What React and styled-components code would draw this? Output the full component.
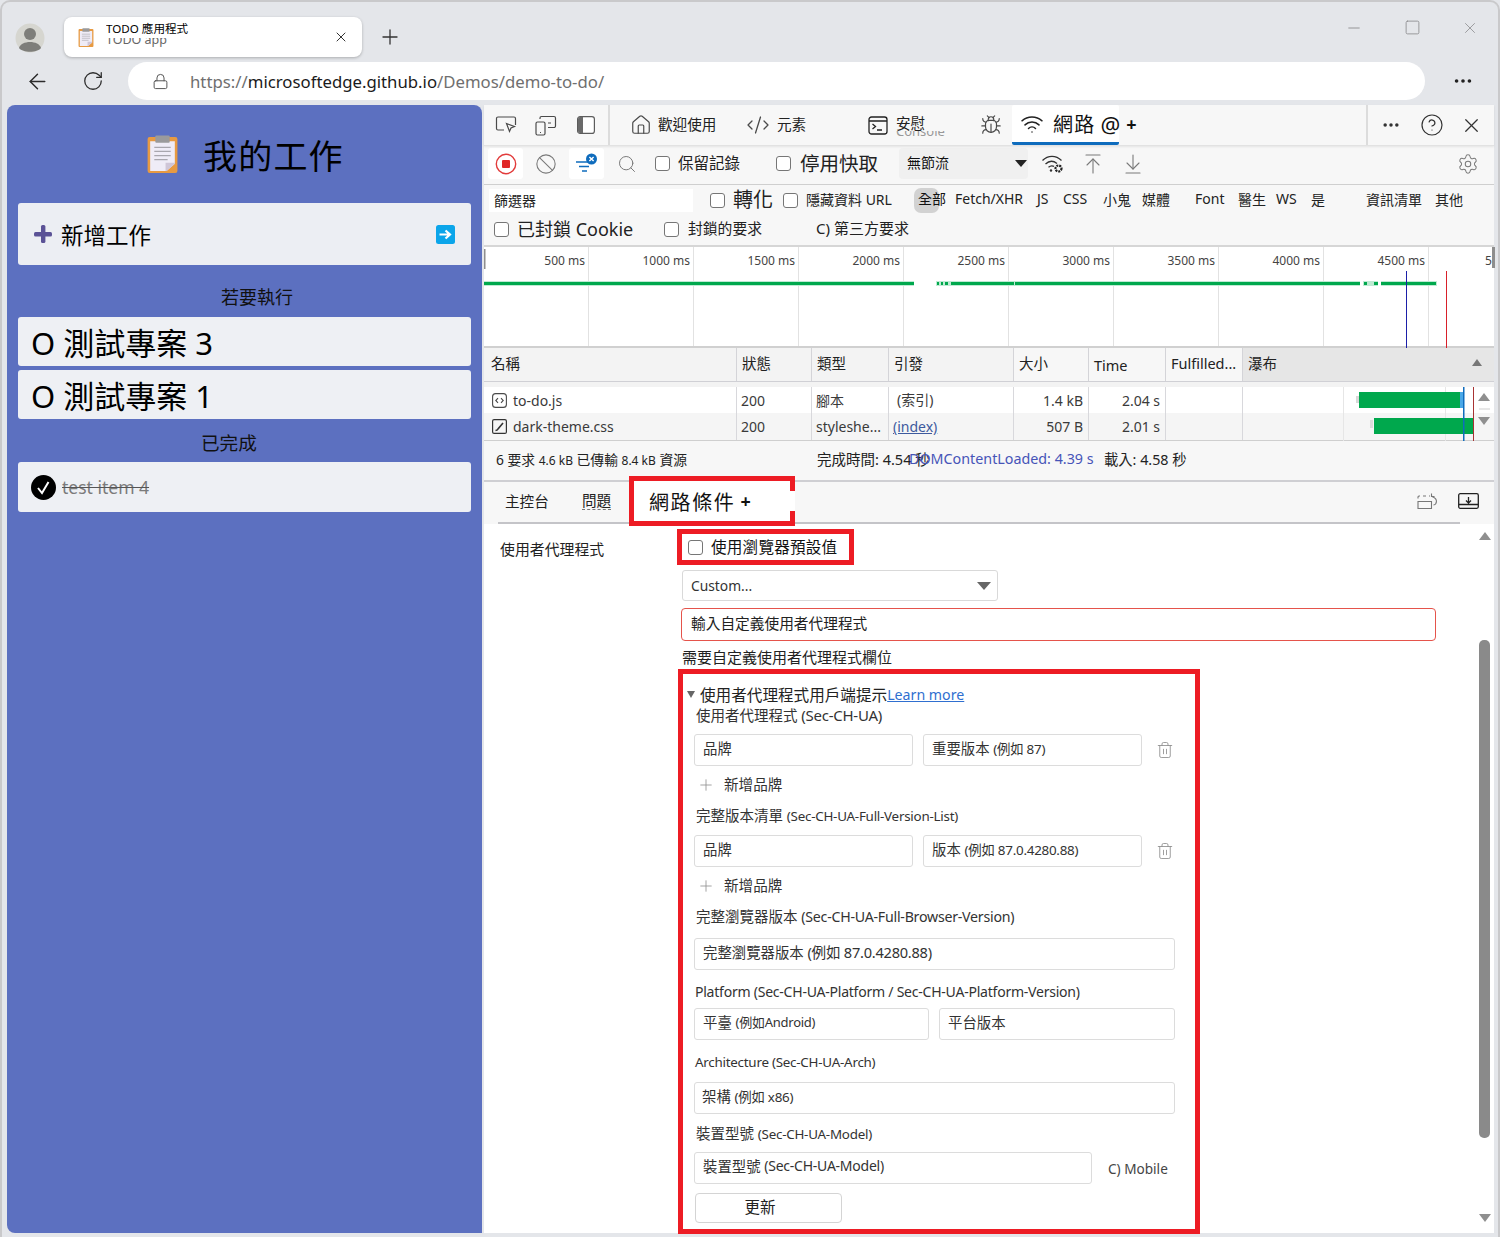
import React from "react";
import styled, { createGlobalStyle } from "styled-components";
import {
  ArrowLeft,
  RotateCw,
  Lock,
  X,
  Plus,
  Minus,
  Square,
  MoreHorizontal,
  House,
  CircleHelp,
  Bug,
  Wifi,
  Search,
  Ban,
  ArrowUpToLine,
  ArrowDownToLine,
  Settings,
  Trash2,
  CodeXml,
} from "lucide-react";

const GlobalStyle = createGlobalStyle`
  html, body {
    margin: 0;
    padding: 0;
    background: #e4e6ea;
  }
  * {
    box-sizing: border-box;
  }
  body {
    font-family: "Noto Sans", "Noto Sans CJK TC", sans-serif;
    color: #1c1c1c;
  }
`;

const Win = styled.div`
  width: 1500px;
  height: 1237px;
  overflow: hidden;
  background: #e4e6ea;
  border: 2px solid #c9c9cb;
  border-bottom: none;
  border-radius: 10px 10px 0 0;
`;

/* browser chrome */
const TabStrip = styled.div`
  height: 58px;
  display: flex;
  align-items: flex-start;
`;

const Avatar = styled.div`
  width: 30px;
  height: 30px;
  margin: 21px 0 0 13px;
  flex: none;
`;

const BrowserTab = styled.div`
  width: 298px;
  height: 40px;
  margin: 15px 0 0 19px;
  padding: 0 13px 0 14px;
  display: flex;
  align-items: center;
  background: #fff;
  border-radius: 8px;
  box-shadow: 0 1px 3px rgba(0, 0, 0, 0.25);
`;

const TabTitles = styled.div`
  flex: 1;
  margin: -5px 0 0 12px;
  height: 27px;
  overflow: hidden;
`;

const TabTitle = styled.div`
  position: relative;
  height: 17px;
  line-height: 16px;
  font-size: 11.6px;
  color: #000;
  background: #fff;
`;

const GhostText = styled.div`
  margin-top: -6px;
  line-height: 16px;
  font-size: 12.5px;
  color: #666;
`;

const NewTab = styled.div`
  margin: 23px 0 0 16px;
  color: #333;
  display: flex;
`;

const WindowButtons = styled.div`
  margin: 17px -1px 0 auto;
  display: flex;
  color: #8d8d8f;
`;

const WindowButton = styled.div`
  width: 58px;
  display: flex;
  justify-content: center;
`;

const AddressRow = styled.div`
  height: 45px;
  padding-top: 2px;
  display: flex;
  align-items: flex-start;
`;

const NavButton = styled.div`
  width: 56px;
  height: 38px;
  display: flex;
  align-items: center;
  justify-content: center;
  color: #2c2c2c;
  margin-left: ${(p) => p.$ml || 0}px;
`;

const UrlBar = styled.div`
  width: 1297px;
  height: 38px;
  margin-left: 7px;
  padding-left: 24px;
  display: flex;
  align-items: center;
  background: #fff;
  border-radius: 19px;
  color: #555;
`;

const UrlText = styled.div`
  margin-left: 21px;
  font-size: 16.75px;
  color: #6f6f6f;
  b {
    font-weight: 400;
    color: #1a1a1a;
  }
`;

const MoreButton = styled.div`
  margin-left: 27px;
  height: 38px;
  display: flex;
  align-items: center;
  color: #222;
`;

const Content = styled.div`
  height: 1128px;
  padding-left: 5px;
  display: flex;
  gap: 2px;
`;

/* todo app */
const TodoPanel = styled.div`
  width: 475px;
  flex: none;
  background: #5c70c0;
  border-radius: 8px 8px 0 8px;
  padding: 0 11px;
`;

const TodoHeader = styled.div`
  height: 98px;
  display: flex;
  align-items: center;
  padding-left: 129px;
  font-size: 34px;
  color: #000;
`;

const TodoTitle = styled.div`
  margin-left: 25px;
  letter-spacing: 1.2px;
`;

const AddCard = styled.div`
  height: 62px;
  display: flex;
  align-items: center;
  padding: 0 16px 0 16px;
  background: #eceef3;
  border-radius: 3px;
  font-size: 22.5px;
  color: #000;
`;

const AddLabel = styled.div`
  flex: 1;
  margin-left: 9px;
`;

const SectionTitle = styled.div`
  height: ${(p) => p.$h}px;
  padding: ${(p) => p.$pt || 0}px 0 0 ${(p) => p.$pl}px;
  line-height: ${(p) => p.$h - (p.$pt || 0)}px;
  font-size: ${(p) => p.$size}px;
  color: #111;
`;

const TaskCard = styled.div`
  height: ${(p) => (p.$done ? 50 : 49)}px;
  margin-bottom: 4px;
  display: flex;
  align-items: center;
  padding-left: 13px;
  background: #eef0f4;
  border-radius: 3px;
  font-size: 31px;
  color: #000;
  white-space: pre;
`;

const DoneText = styled.div`
  margin-left: 6px;
  font-size: 17.5px;
  color: #7b7b7b;
  text-decoration: line-through;
  text-decoration-color: #555;
`;

/* devtools */
const DevTools = styled.div`
  width: 1010px;
  flex: none;
  background: #fff;
  display: flex;
  flex-direction: column;
`;

const MainTabs = styled.div`
  height: 41px;
  display: flex;
  align-items: center;
  background: #f7f7f7;
  border-bottom: 1px solid #e2e2e2;
  box-shadow: 0 1px 2px rgba(0, 0, 0, 0.08);
  position: relative;
`;

const MainTabIcon = styled.div`
  width: ${(p) => p.$w}px;
  height: 40px;
  flex: none;
  margin-left: ${(p) => p.$ml || 0}px;
  display: flex;
  align-items: center;
  justify-content: center;
  color: #4a4a4a;
`;

const MainTabText = styled.div`
  width: ${(p) => p.$w}px;
  flex: none;
  margin: 0 0 3px ${(p) => p.$ml || 0}px;
  font-size: 14.6px;
  white-space: nowrap;
  color: #222;
`;

const Separator = styled.div`
  width: 2px;
  height: 40px;
  flex: none;
  background: #dcdcdc;
`;

const ClippedTab = styled.div`
  width: 80px;
  height: 24px;
  margin: 6px 0 0 3px;
  flex: none;
  overflow: hidden;
`;

const ClippedLabel = styled.div`
  position: relative;
  width: 54px;
  height: 15px;
  line-height: 15px;
  font-size: 14.6px;
  color: #222;
  background: #f7f7f7;
`;

const ClippedGhost = styled.div`
  margin-top: -7px;
  font-size: 13px;
  line-height: 14px;
  color: #999;
`;

const NetworkTab = styled.div`
  width: 107px;
  height: 40px;
  flex: none;
  margin-left: 6px;
  display: flex;
  align-items: center;
  background: #fff;
  border-bottom: 3px solid #0f6cbd;
  border-radius: 2px;
  padding-left: 8px;
  color: #111;
  white-space: nowrap;
  svg {
    flex: none;
  }
`;

const NetworkLabel = styled.span`
  margin-left: 9px;
  font-size: 20px;
  letter-spacing: 1.2px;
`;

const NetworkMark = styled.span`
  margin-left: 5px;
  font-size: 22px;
`;

const NetworkPlus = styled.span`
  margin-left: 6px;
  font-size: 18px;
  font-weight: 700;
`;

const TabActions = styled.div`
  display: flex;
  align-items: center;
  color: #333;
`;

const ActionButton = styled.div`
  width: ${(p) => p.$w}px;
  display: flex;
  justify-content: center;
`;

const Toolbar = styled.div`
  height: 39px;
  padding-bottom: 3px;
  display: flex;
  align-items: center;
  background: #f7f7f7;
  border-bottom: 1px solid #cfcfcf;
`;

const ToolButton = styled.div`
  width: ${(p) => p.$w}px;
  height: 31px;
  flex: none;
  margin-left: ${(p) => p.$ml || 0}px;
  display: flex;
  align-items: center;
  justify-content: center;
  border-radius: 3px;
  color: #7a7a7a;
  background: ${(p) => (p.$lit ? "#fff" : "transparent")};
`;

const Check = styled.span`
  width: 15px;
  height: 15px;
  flex: none;
  display: block;
  margin-left: ${(p) => p.$ml || 0}px;
  background: #fff;
  border: 1.5px solid #767676;
  border-radius: 3px;
`;

const CheckLabel = styled.div`
  width: ${(p) => p.$w}px;
  flex: none;
  margin: 0 0 3px ${(p) => p.$ml || 0}px;
  font-size: ${(p) => p.$size}px;
  white-space: nowrap;
  color: #222;
`;

const ThrottleSelect = styled.div`
  width: 129px;
  height: 31px;
  flex: none;
  padding: 0 1px 0 8px;
  display: flex;
  align-items: center;
  justify-content: space-between;
  border-radius: 4px;
  background: #f0f0f0;
  font-size: 14px;
  color: #111;
`;

const ThrottleText = styled.span`
  margin-bottom: 3px;
`;

const FilterBar = styled.div`
  height: 60px;
  background: #f7f7f7;
  padding-top: 2px;
`;

const FilterRow = styled.div`
  height: ${(p) => p.$h}px;
  display: flex;
  align-items: center;
`;

const FilterInput = styled.div`
  width: 204px;
  height: 23px;
  flex: none;
  margin-left: 5px;
  padding-left: 5px;
  background: #fff;
  font-size: 14px;
  line-height: 23px;
  color: #222;
`;

const TypeChip = styled.div`
  width: ${(p) => p.$w}px;
  flex: none;
  margin-bottom: 3px;
  font-size: 14px;
  white-space: nowrap;
  color: #222;
`;

const ActiveChip = styled.div`
  width: 25px;
  height: 25px;
  flex: none;
  margin-right: 16px;
  padding-left: 4px;
  line-height: 22px;
  font-size: 14px;
  white-space: nowrap;
  background: #d2d2d2;
  border-radius: 7px;
  color: #111;
`;

const Timeline = styled.div`
  position: relative;
  height: 103px;
  display: flex;
  background: #fff;
  border-top: 2px solid #d6d6d6;
  border-bottom: 2px solid #d0d0d0;
`;

const Tick = styled.div`
  width: 105px;
  flex: none;
  padding: 5px 3px 0 0;
  text-align: right;
  font-size: 12px;
  color: #444;
  border-right: 1px solid #e2e2e2;
`;

const LastTick = styled.div`
  flex: 1;
  padding: 5px 0 0 56px;
  font-size: 12px;
  color: #444;
  border-right: 3px solid #8e8e8e;
  border-image: linear-gradient(#8e8e8e 22px, transparent 22px) 1;
`;

const TimelineOverlay = styled.svg`
  position: absolute;
  left: 0;
  top: -2px;
`;

const Table = styled.div`
  position: relative;
  border-bottom: 1px solid #cfcfcf;
`;

const HeaderRow = styled.div`
  display: grid;
  grid-template-columns: 253px 75px 77px 125px 75px 77px 77px 1fr;
  height: 34px;
  background: #f3f3f3;
  border-bottom: 1px solid #d0d0d5;
`;

const HeaderCell = styled.div`
  display: flex;
  align-items: center;
  justify-content: space-between;
  padding: 0 12px ${(p) => (p.$latin ? 0 : 4)}px ${(p) => (p.$first ? 7 : 5)}px;
  font-size: 14.5px;
  white-space: nowrap;
  color: #222;
  background: ${(p) => (p.$sorted ? "#e6e6e6" : p.$plain ? "#f7f7f7" : "transparent")};
  border-right: ${(p) => (p.$sorted ? "none" : "1px solid #d4d4d8")};
`;

const RowGap = styled.div`
  height: 5px;
  background: #f3f3f3;
`;

const DataRow = styled.div`
  display: grid;
  grid-template-columns: 253px 75px 77px 125px 75px 77px 77px 1fr;
  height: ${(p) => p.$h}px;
  background: ${(p) => (p.$alt ? "#f5f5f5" : "#fff")};
`;

const DataCell = styled.div`
  display: flex;
  align-items: center;
  justify-content: ${(p) => (p.$right ? "flex-end" : "flex-start")};
  padding: 0 5px 0 ${(p) => (p.$first ? 8 : 4)}px;
  font-size: 14px;
  white-space: nowrap;
  overflow: hidden;
  color: #3a3a3a;
  border-right: ${(p) => (p.$bare ? "none" : "1px solid #d8d8dc")};
`;

const FileName = styled.span`
  margin-left: 6px;
`;

const Initiator = styled.span`
  margin: 0 0 2px 4px;
`;

const InitiatorLink = styled.span`
  color: #3d5a9e;
  text-decoration: underline;
`;

const WaterfallOverlay = styled.svg`
  position: absolute;
  right: 0;
  top: 34px;
`;

const Summary = styled.div`
  height: 41px;
  padding-bottom: 4px;
  display: flex;
  align-items: center;
  background: #f7f7f7;
  white-space: nowrap;
  border-bottom: 2px solid #cfcfd3;
`;

const SummaryPart = styled.div`
  width: ${(p) => p.$w}px;
  flex: none;
  margin-left: ${(p) => p.$ml || 0}px;
  position: relative;
  color: ${(p) => (p.$link ? "#4654b8" : "#222")};
  font-size: ${(p) => p.$size || 13.8}px;
`;

const SmallNum = styled.span`
  font-size: 12px;
`;

const DrawerTabs = styled.div`
  position: relative;
  height: 42px;
  display: flex;
  align-items: center;
  background: #f7f7f7;
`;

const DrawerLine = styled.div`
  position: absolute;
  left: 14px;
  right: 34px;
  bottom: 0;
  height: 2px;
  background: #c4c4c8;
`;

const DrawerTab = styled.div`
  width: ${(p) => p.$w}px;
  margin: 0 0 6px ${(p) => p.$ml || 0}px;
  flex: none;
  font-size: 14.6px;
  color: #222;
`;

const IssuesLabel = styled.span`
  border-bottom: 1px dashed #777;
  line-height: 17px;
  display: inline-block;
`;

const ActiveDrawerTab = styled.div`
  position: relative;
  z-index: 2;
  width: 166px;
  height: 50px;
  margin-bottom: 4px;
  flex: none;
  display: flex;
  align-items: center;
  border: 5px solid #ed1c24;
  background: #fff;
`;

const ActiveDrawerLabel = styled.div`
  position: relative;
  width: calc(100% + 5px);
  height: 20px;
  padding-left: 15px;
  display: flex;
  align-items: center;
  flex: none;
  background: #fff;
  font-size: 20px;
  letter-spacing: 1.6px;
  color: #111;
`;

const DrawerPlus = styled.span`
  margin-left: 5px;
  font-size: 18px;
  font-weight: 700;
  letter-spacing: 0;
`;

const DrawerActions = styled.div`
  margin: 0 6px 4px auto;
  display: flex;
  align-items: center;
  color: #777;
`;

const DrawerAction = styled.div`
  width: 40px;
  height: 30px;
  display: flex;
  align-items: center;
  justify-content: center;
`;

const Body = styled.div`
  position: relative;
  flex: 1;
  display: grid;
  grid-template-columns: 193px 1fr;
  background: #fff;
  min-height: 0;
`;

const RowLabel = styled.div`
  padding: 14px 0 0 16px;
  font-size: 14.9px;
  color: #222;
`;

const SettingsColumn = styled.div`
  display: flex;
  flex-direction: column;
  align-items: flex-start;
  padding-top: 5px;
`;

const DefaultBox = styled.div`
  width: 177px;
  height: 36px;
  padding-left: 6px;
  display: flex;
  align-items: center;
  border: 5px solid #ed1c24;
`;

const DefaultLabel = styled.div`
  margin: 0 0 2px 8px;
  font-size: 15.6px;
  letter-spacing: 0.2px;
  white-space: nowrap;
  color: #111;
`;

const UaSelect = styled.div`
  width: 316px;
  height: 31px;
  margin: 5px 0 0 5px;
  padding: 0 6px 0 8px;
  display: flex;
  align-items: center;
  justify-content: space-between;
  border: 1px solid #d9d9d9;
  border-radius: 3px;
  font-size: 13.8px;
  color: #333;
`;

const UaInput = styled.div`
  width: 755px;
  height: 33px;
  margin: 7px 0 0 4px;
  padding: 0 0 4px 9px;
  display: flex;
  align-items: center;
  border: 1px solid #e5534b;
  border-radius: 4px;
  font-size: 14.7px;
  color: #222;
`;

const Helper = styled.div`
  height: 20px;
  margin: 6px 0 0 5px;
  line-height: 20px;
  font-size: 15px;
  color: #222;
`;

const HintsBox = styled.div`
  width: 522px;
  height: 565px;
  margin: 2px 0 0 1px;
  padding: 11px 0 0 11px;
  border: 5px solid #ed1c24;
`;

const Disclosure = styled.div`
  height: 20px;
  margin-left: -7px;
  padding-bottom: 2px;
  display: flex;
  align-items: center;
  font-size: 15.6px;
  color: #222;
  white-space: nowrap;
`;

const DisclosureArrow = styled.span`
  width: 0;
  height: 0;
  margin-right: 5px;
  border-left: 4.5px solid transparent;
  border-right: 4.5px solid transparent;
  border-top: 7px solid #666;
`;

const LearnMore = styled.a`
  font-size: 14.2px;
  color: #2f6fd0;
  text-decoration: underline;
`;

const Caption = styled.div`
  height: 20px;
  margin: ${(p) => p.$mt || 0}px 0 0 ${(p) => p.$ml ?? 2}px;
  line-height: 20px;
  font-size: 14.5px;
  color: #333;
  white-space: nowrap;
`;

const Latin = styled.span`
  font-size: ${(p) => p.$size || 13.4}px;
  letter-spacing: -0.25px;
`;

const FieldRow = styled.div`
  display: flex;
  align-items: center;
  gap: 10px;
  margin-top: ${(p) => p.$mt || 0}px;
`;

const Field = styled.div`
  width: ${(p) => p.$w}px;
  height: 32px;
  flex: none;
  padding: 0 0 5px ${(p) => p.$pl ?? 8}px;
  display: flex;
  align-items: center;
  margin-top: ${(p) => p.$mt || 0}px;
  border: 1px solid #dcdcdc;
  border-radius: 3px;
  font-size: 14.4px;
  color: #333;
  white-space: pre;
`;

const TrashButton = styled.div`
  margin-left: 4px;
  display: flex;
  color: #8a8a8a;
`;

const AddBrand = styled.div`
  height: 20px;
  margin: 9px 0 0 3px;
  display: flex;
  align-items: center;
  font-size: 14.6px;
  color: #333;
  svg {
    color: #909090;
    margin-right: 9px;
  }
`;

const AddBrandText = styled.span`
  margin-bottom: 3px;
`;

const MobileToggle = styled.div`
  margin-left: 6px;
  font-size: 13.6px;
  color: #444;
`;

const UpdateButton = styled.div`
  width: 147px;
  height: 30px;
  margin: 9px 0 0 1px;
  padding: 0 17px 3px 0;
  display: flex;
  align-items: center;
  justify-content: center;
  border: 1px solid #d4d4d4;
  border-radius: 4px;
  font-size: 15.5px;
  color: #222;
`;

const Scrollbar = styled.div`
  position: absolute;
  top: 8px;
  right: 3px;
  bottom: 11px;
  width: 13px;
  display: flex;
  flex-direction: column;
  align-items: center;
  justify-content: space-between;
`;

const ScrollThumb = styled.div`
  position: absolute;
  top: 108px;
  left: 1px;
  width: 11px;
  height: 498px;
  border-radius: 5px;
  background: #8a8a8a;
`;

const Triangle = styled.span`
  width: 0;
  height: 0;
  display: block;
  border-left: ${(p) => p.$s}px solid transparent;
  border-right: ${(p) => p.$s}px solid transparent;
  border-${(p) => (p.$up ? "bottom" : "top")}: ${(p) => p.$h}px solid ${(p) => p.$c || "#888"};
`;

const AvatarIcon = () => (
  <svg width="30" height="30" viewBox="0 0 30 30">
    <circle cx="15" cy="15" r="14.5" fill="#d6d6d0" />
    <circle cx="15" cy="11" r="6" fill="#7e7e7a" />
    <path d="M4 25 C6 17 24 17 26 25 C22 30 8 30 4 25Z" fill="#7e7e7a" />
  </svg>
);

const Clipboard = ({ w, h }) => (
  <svg width={w} height={h} viewBox="0 0 30 37">
    <rect x="0.5" y="2" width="29" height="35" rx="2" fill="#e79a42" />
    <path d="M3 6h24v22l-8 7H3z" fill="#efecf7" />
    <path d="M19 35l8-7v-1h-9v8z" fill="#cfc6d8" />
    <rect x="8" y="0.5" width="14" height="7" rx="1" fill="#9a9a9c" />
    <path d="M7 12h16M7 16h16M7 20h16M7 24h13" stroke="#a8a6ae" strokeWidth="1.2" />
  </svg>
);

const BoldPlus = () => (
  <svg width="18" height="18" viewBox="0 0 18 18" fill="#5b5296">
    <rect x="7" y="0" width="4.4" height="18" rx="1.5" />
    <rect x="0" y="7" width="18" height="4.4" rx="1.5" />
  </svg>
);

const EnterIcon = () => (
  <svg width="19" height="19" viewBox="0 0 19 19">
    <rect width="19" height="19" rx="2.5" fill="#0ba5ea" />
    <path d="M3.5 9.5h9M9.5 5.5l4.5 4-4.5 4" stroke="#fff" strokeWidth="2.2" fill="none" />
  </svg>
);

const InspectIcon = () => (
  <svg width="22" height="20" viewBox="0 0 22 20" fill="none" stroke="currentColor" strokeWidth="1.2">
    <path d="M9 15H3a1.5 1.5 0 0 1-1.5-1.5v-10A1.5 1.5 0 0 1 3 2h16a1.5 1.5 0 0 1 1.5 1.5V10" />
    <path d="M11.5 8.5l8 3-3.5 1.5-1.5 3.5z" />
  </svg>
);

const DeviceIcon = () => (
  <svg width="22" height="21" viewBox="0 0 22 21" fill="none" stroke="currentColor" strokeWidth="1.2">
    <rect x="1" y="7" width="9" height="13" rx="1.5" />
    <path d="M5 17.5h1" />
    <path d="M5 4V3a1.5 1.5 0 0 1 1.5-1.5H19A1.5 1.5 0 0 1 20.5 3v8a1.5 1.5 0 0 1-1.5 1.5h-6M13 8h3" />
  </svg>
);

const DockIcon = () => (
  <svg width="18" height="18" viewBox="0 0 18 18">
    <rect x="0.6" y="0.6" width="16.8" height="16.8" rx="2.5" fill="#fff" stroke="#5c5c5c" strokeWidth="1.2" />
    <path d="M3 1h3v16H3a2 2 0 0 1-2-2V3a2 2 0 0 1 2-2z" fill="#6a6a6a" />
  </svg>
);

const ConsoleIcon = () => (
  <svg width="20" height="19" viewBox="0 0 20 19" fill="none" stroke="#222" strokeWidth="1.3">
    <rect x="1" y="1" width="18" height="17" rx="2.5" />
    <path d="M1 5h18M4.5 8l3 2.5-3 2.5M9 14h5" />
  </svg>
);

const RecordIcon = () => (
  <svg width="22" height="22" viewBox="0 0 22 22">
    <circle cx="11" cy="11" r="9.7" fill="none" stroke="#e23b3b" strokeWidth="1.4" />
    <rect x="7" y="7" width="8" height="8" rx="1" fill="#e02828" />
  </svg>
);

const FilterIcon = () => (
  <svg width="24" height="22" viewBox="0 0 24 22" fill="none">
    <path d="M1 9h14M4 13.5h10M7 18h5" stroke="#0f6cbd" strokeWidth="1.4" />
    <circle cx="16.5" cy="6" r="5.5" fill="#0f6cbd" />
    <path d="M14.4 3.9l4.2 4.2M18.6 3.9l-4.2 4.2" stroke="#fff" strokeWidth="1.4" />
  </svg>
);

const WifiGear = () => (
  <svg width="24" height="21" viewBox="0 0 24 21" fill="none" stroke="#333" strokeWidth="1.3">
    <path d="M1.5 7.5C7 2 15 2 20.5 7.5M4.5 11c3.5-3.3 8-3.3 11.5-0.5M7.5 14.2c2-1.6 4-1.6 5.5-0.8" />
    <circle cx="10" cy="17.5" r="1.2" fill="#333" stroke="none" />
    <circle cx="17.5" cy="15.5" r="3" stroke="#222" strokeWidth="2.2" strokeDasharray="2 0.9" />
  </svg>
);

const ScriptFile = () => (
  <svg width="15" height="15" viewBox="0 0 15 15" fill="none" stroke="#4a4a4a" strokeWidth="1.1">
    <rect x="0.6" y="0.6" width="13.8" height="13.8" rx="3" />
    <path d="M6 5.2L3.8 7.5 6 9.8M9 5.2l2.2 2.3L9 9.8" />
  </svg>
);

const StyleFile = () => (
  <svg width="15" height="15" viewBox="0 0 15 15" fill="none" stroke="#333" strokeWidth="1.2">
    <rect x="0.6" y="0.6" width="13.8" height="13.8" rx="1.5" />
    <path d="M3.5 11.5c1.5 0 2-.5 2.5-1.5L11 4" strokeWidth="1.6" />
  </svg>
);

const DockRotate = () => (
  <svg width="22" height="18" viewBox="0 0 22 18" fill="none" stroke="#777" strokeWidth="1.1">
    <path d="M1 9.5h13.5v7H1zM1 6.5V5a1 1 0 0 1 1-1h1M6 4h3M12 4h1M16.5 13c3.5-.5 4.5-6-.5-8l-1.5-1M14.5 1.5V4.5h3" />
  </svg>
);

const DockDown = () => (
  <svg width="21" height="16" viewBox="0 0 21 16" fill="none" stroke="#222" strokeWidth="1.3">
    <rect x="0.7" y="0.7" width="19.6" height="14.6" rx="1.5" />
    <path d="M1 11.5h19M10.5 4v5.5M8 7.5l2.5 2.5L13 7.5" />
  </svg>
);

const CheckedCircle = () => (
  <svg width="25" height="25" viewBox="0 0 25 25">
    <circle cx="12.5" cy="12.5" r="12.5" fill="#000" />
    <path d="M7 13l4 5 6.5-11" stroke="#fff" strokeWidth="2" fill="none" />
  </svg>
);

const TimelineChart = () => (
  <TimelineOverlay width="1010" height="103" viewBox="0 0 1010 103">
    <rect x="0" y="4" width="1.5" height="20" fill="#8e8e8e" />
    <g fill="#bfead3">
      <rect x="0" y="36" width="430" height="5" />
      <rect x="452" y="36" width="80" height="5" />
      <rect x="531" y="36" width="345" height="5" />
      <rect x="879" y="36" width="15" height="5" />
      <rect x="897" y="36" width="56" height="5" />
    </g>
    <g fill="#00a84d">
      <rect x="0" y="37" width="430" height="3" />
      <rect x="453" y="37" width="2" height="3" />
      <rect x="457" y="37" width="2" height="3" />
      <rect x="461" y="37" width="3" height="3" />
      <rect x="467" y="37" width="63" height="3" />
      <rect x="531" y="37" width="345" height="3" />
      <rect x="880" y="37" width="3" height="3" />
      <rect x="890" y="37" width="4" height="3" />
      <rect x="897" y="37" width="55" height="3" />
    </g>
    <rect x="922" y="26" width="1" height="77" fill="#1b1fa8" />
    <rect x="962" y="26" width="1" height="77" fill="#d8202a" />
  </TimelineOverlay>
);

const WaterfallChart = () => (
  <WaterfallOverlay width="251" height="59" viewBox="0 0 251 59">
    <path d="M100.5 5v54M202.5 5v54" stroke="#e6e6e6" />
    <rect x="113" y="14" width="3" height="7" fill="#d8d8d8" />
    <rect x="116" y="10" width="101" height="16" fill="#00a84d" />
    <rect x="217" y="10" width="3" height="16" fill="#4aa8e8" />
    <rect x="127" y="38" width="3" height="8" fill="#dcdcdc" />
    <rect x="131" y="36" width="99" height="16" fill="#00a84d" />
    <rect x="220" y="5" width="1.5" height="54" fill="#0f6cbd" />
    <rect x="230" y="5" width="1" height="54" fill="#a83232" />
    <path d="M235 19l6-8 6 8z" fill="#8f8f8f" />
    <path d="M236 27h11" stroke="#cfcfcf" />
    <path d="M235 35l6 8 6-8z" fill="#8f8f8f" />
  </WaterfallOverlay>
);

const ticks = [500, 1000, 1500, 2000, 2500, 3000, 3500, 4000, 4500];

const types = [
  ["Fetch/XHR", 82],
  ["JS", 26],
  ["CSS", 40],
  ["小鬼", 39],
  ["媒體", 53],
  ["Font", 43],
  ["醫生", 38],
  ["WS", 35],
  ["是", 55],
  ["資訊清單", 69],
  ["其他", 30],
];

const BrandFields = ({ children, mt }) => (
  <FieldRow $mt={mt}>
    <Field $w={219}>品牌</Field>
    <Field $w={219}>{children}</Field>
    <TrashButton>
      <Trash2 size={18} strokeWidth={1.1} />
    </TrashButton>
  </FieldRow>
);

const AddBrandRow = () => (
  <AddBrand>
    <Plus size={18} strokeWidth={1.1} />
    <AddBrandText>新增品牌</AddBrandText>
  </AddBrand>
);

const App = () => {
  return (
    <Win>
      <GlobalStyle />
      <TabStrip>
        <Avatar>
          <AvatarIcon />
        </Avatar>
        <BrowserTab>
          <Clipboard w={16} h={19} />
          <TabTitles>
            <TabTitle>TODO 應用程式</TabTitle>
            <GhostText>TODO app</GhostText>
          </TabTitles>
          <X size={16} strokeWidth={1.5} color="#333" />
        </BrowserTab>
        <NewTab>
          <Plus size={24} strokeWidth={1.3} />
        </NewTab>
        <WindowButtons>
          <WindowButton>
            <Minus size={18} strokeWidth={1.2} />
          </WindowButton>
          <WindowButton>
            <Square size={17} strokeWidth={1.2} />
          </WindowButton>
          <WindowButton>
            <X size={18} strokeWidth={1.1} />
          </WindowButton>
        </WindowButtons>
      </TabStrip>
      <AddressRow>
        <NavButton $ml={7}>
          <ArrowLeft size={25} strokeWidth={1.4} />
        </NavButton>
        <NavButton>
          <RotateCw size={22} strokeWidth={1.4} />
        </NavButton>
        <UrlBar>
          <Lock size={17} strokeWidth={1.4} />
          <UrlText>
            https://<b>microsoftedge.github.io</b>/Demos/demo-to-do/
          </UrlText>
        </UrlBar>
        <MoreButton>
          <MoreHorizontal size={22} strokeWidth={2} />
        </MoreButton>
      </AddressRow>
      <Content>
        <TodoPanel>
          <TodoHeader>
            <Clipboard w={31} h={38} />
            <TodoTitle>我的工作</TodoTitle>
          </TodoHeader>
          <AddCard>
            <BoldPlus />
            <AddLabel>新增工作</AddLabel>
            <EnterIcon />
          </AddCard>
          <SectionTitle $h={52} $pt={12} $pl={203} $size={18}>
            若要執行
          </SectionTitle>
          <TaskCard>O 測試專案 3</TaskCard>
          <TaskCard>O 測試專案 1</TaskCard>
          <SectionTitle $h={39} $pl={183} $size={18.6}>
            已完成
          </SectionTitle>
          <TaskCard $done>
            <CheckedCircle />
            <DoneText>test item 4</DoneText>
          </TaskCard>
        </TodoPanel>

        <DevTools>
          <MainTabs>
            <MainTabIcon $w={44}>
              <InspectIcon />
            </MainTabIcon>
            <MainTabIcon $w={36}>
              <DeviceIcon />
            </MainTabIcon>
            <MainTabIcon $w={44}>
              <DockIcon />
            </MainTabIcon>
            <Separator />
            <MainTabIcon $w={30} $ml={16}>
              <House size={22} strokeWidth={1.3} />
            </MainTabIcon>
            <MainTabText $w={85} $ml={2}>
              歡迎使用
            </MainTabText>
            <MainTabIcon $w={30}>
              <CodeXml size={24} strokeWidth={1.3} />
            </MainTabIcon>
            <MainTabText $w={86} $ml={4}>
              元素
            </MainTabText>
            <MainTabIcon $w={30}>
              <ConsoleIcon />
            </MainTabIcon>
            <ClippedTab>
              <ClippedLabel>安慰</ClippedLabel>
              <ClippedGhost>Console</ClippedGhost>
            </ClippedTab>
            <MainTabIcon $w={30}>
              <Bug size={22} strokeWidth={1.3} />
            </MainTabIcon>
            <NetworkTab>
              <Wifi size={24} strokeWidth={1.5} color="#222" />
              <NetworkLabel>網路</NetworkLabel>
              <NetworkMark>@</NetworkMark>
              <NetworkPlus>+</NetworkPlus>
            </NetworkTab>
            <MainTabIcon $w={247} />
            <Separator />
            <TabActions>
              <ActionButton $w={46}>
                <MoreHorizontal size={20} strokeWidth={2.2} />
              </ActionButton>
              <ActionButton $w={36}>
                <CircleHelp size={24} strokeWidth={1.2} />
              </ActionButton>
              <ActionButton $w={42}>
                <X size={23} strokeWidth={1.3} />
              </ActionButton>
            </TabActions>
          </MainTabs>
          <Toolbar>
            <ToolButton $w={35} $ml={4} $lit>
              <RecordIcon />
            </ToolButton>
            <ToolButton $w={46}>
              <Ban size={22} strokeWidth={1.2} />
            </ToolButton>
            <ToolButton $w={35} $lit>
              <FilterIcon />
            </ToolButton>
            <ToolButton $w={46}>
              <Search size={20} strokeWidth={1.2} />
            </ToolButton>
            <Check $ml={5} />
            <CheckLabel $w={98} $ml={8} $size={15.5}>
              保留記錄
            </CheckLabel>
            <Check />
            <CheckLabel $w={99} $ml={9} $size={19.5}>
              停用快取
            </CheckLabel>
            <ThrottleSelect>
              <ThrottleText>無節流</ThrottleText>
              <Triangle $s={6} $h={7} $c="#222" />
            </ThrottleSelect>
            <ToolButton $w={50}>
              <WifiGear />
            </ToolButton>
            <ToolButton $w={30}>
              <ArrowUpToLine size={24} strokeWidth={1.1} />
            </ToolButton>
            <ToolButton $w={50}>
              <ArrowDownToLine size={24} strokeWidth={1.1} />
            </ToolButton>
            <ToolButton $w={24} $ml={298}>
              <Settings size={22} strokeWidth={1.1} />
            </ToolButton>
          </Toolbar>
          <FilterBar>
            <FilterRow $h={26}>
              <FilterInput>篩選器</FilterInput>
              <Check $ml={17} />
              <CheckLabel $w={48} $ml={8} $size={20}>
                轉化
              </CheckLabel>
              <Check $ml={2} />
              <CheckLabel $w={108} $ml={8} $size={14}>
                隱藏資料 URL
              </CheckLabel>
              <ActiveChip>全部</ActiveChip>
              {types.map(([label, w]) => (
                <TypeChip key={label} $w={w}>
                  {label}
                </TypeChip>
              ))}
            </FilterRow>
            <FilterRow $h={32}>
              <Check $ml={10} />
              <CheckLabel $w={147} $ml={8} $size={18}>
                已封鎖 Cookie
              </CheckLabel>
              <Check />
              <CheckLabel $w={128} $ml={9} $size={14.8}>
                封鎖的要求
              </CheckLabel>
              <CheckLabel $w={120} $size={15}>
                C) 第三方要求
              </CheckLabel>
            </FilterRow>
          </FilterBar>
          <Timeline>
            {ticks.map((t) => (
              <Tick key={t}>{t} ms</Tick>
            ))}
            <LastTick>5</LastTick>
            <TimelineChart />
          </Timeline>
          <Table>
            <HeaderRow>
              <HeaderCell $first>名稱</HeaderCell>
              <HeaderCell>狀態</HeaderCell>
              <HeaderCell>類型</HeaderCell>
              <HeaderCell>引發</HeaderCell>
              <HeaderCell $plain>大小</HeaderCell>
              <HeaderCell $plain $latin>
                Time
              </HeaderCell>
              <HeaderCell $plain>Fulfilled...</HeaderCell>
              <HeaderCell $sorted>
                瀑布
                <Triangle $up $s={5} $h={7} $c="#777" />
              </HeaderCell>
            </HeaderRow>
            <RowGap />
            <DataRow $h={26}>
              <DataCell $first>
                <ScriptFile />
                <FileName>to-do.js</FileName>
              </DataCell>
              <DataCell>200</DataCell>
              <DataCell>腳本</DataCell>
              <DataCell>
                <Initiator>(索引)</Initiator>
              </DataCell>
              <DataCell $right>1.4 kB</DataCell>
              <DataCell $right>2.04 s</DataCell>
              <DataCell />
              <DataCell $bare />
            </DataRow>
            <DataRow $h={27} $alt>
              <DataCell $first>
                <StyleFile />
                <FileName>dark-theme.css</FileName>
              </DataCell>
              <DataCell>200</DataCell>
              <DataCell>styleshe...</DataCell>
              <DataCell>
                <InitiatorLink>(index)</InitiatorLink>
              </DataCell>
              <DataCell $right>507 B</DataCell>
              <DataCell $right>2.01 s</DataCell>
              <DataCell />
              <DataCell $bare />
            </DataRow>
            <WaterfallChart />
          </Table>
          <Summary>
            <SummaryPart $w={321} $ml={12}>
              6 要求 <SmallNum>4.6 kB</SmallNum> 已傳輸 <SmallNum>8.4 kB</SmallNum> 資源
            </SummaryPart>
            <SummaryPart $w={92} $size={14.5}>
              完成時間: 4.54 秒
            </SummaryPart>
            <SummaryPart $w={195} $link $size={14.3}>
              DOMContentLoaded: 4.39 s
            </SummaryPart>
            <SummaryPart $w={90} $size={14.3}>
              載入: 4.58 秒
            </SummaryPart>
          </Summary>
          <DrawerTabs>
            <DrawerLine />
            <DrawerTab $w={77} $ml={21}>
              主控台
            </DrawerTab>
            <DrawerTab $w={47}>
              <IssuesLabel>問題</IssuesLabel>
            </DrawerTab>
            <ActiveDrawerTab>
              <ActiveDrawerLabel>
                網路條件
                <DrawerPlus>+</DrawerPlus>
              </ActiveDrawerLabel>
            </ActiveDrawerTab>
            <DrawerActions>
              <DrawerAction>
                <DockRotate />
              </DrawerAction>
              <DrawerAction>
                <DockDown />
              </DrawerAction>
            </DrawerActions>
          </DrawerTabs>
          <Body>
            <RowLabel>使用者代理程式</RowLabel>
            <SettingsColumn>
              <DefaultBox>
                <Check />
                <DefaultLabel>使用瀏覽器預設值</DefaultLabel>
              </DefaultBox>
              <UaSelect>
                Custom...
                <Triangle $s={7} $h={8} $c="#666" />
              </UaSelect>
              <UaInput>輸入自定義使用者代理程式</UaInput>
              <Helper>需要自定義使用者代理程式欄位</Helper>
              <HintsBox>
                <Disclosure>
                  <DisclosureArrow />
                  使用者代理程式用戶端提示
                  <LearnMore>Learn more</LearnMore>
                </Disclosure>
                <Caption>
                  使用者代理程式 <Latin $size={15}>(Sec-CH-UA)</Latin>
                </Caption>
                <BrandFields mt={9}>
                  重要版本 <Latin>(例如 87)</Latin>
                </BrandFields>
                <AddBrandRow />
                <Caption $mt={10}>
                  完整版本清單 <Latin>(Sec-CH-UA-Full-Version-List)</Latin>
                </Caption>
                <BrandFields mt={10}>
                  版本 <Latin>(例如 87.0.4280.88)</Latin>
                </BrandFields>
                <AddBrandRow />
                <Caption $mt={10}>
                  完整瀏覽器版本 <Latin $size={14.2}>(Sec-CH-UA-Full-Browser-Version)</Latin>
                </Caption>
                <Field $w={481} $mt={12}>
                  完整瀏覽器版本 <Latin $size={14.6}>(例如 87.0.4280.88)</Latin>
                </Field>
                <Caption $mt={11} $ml={1}>
                  <Latin $size={14.05}>Platform (Sec-CH-UA-Platform / Sec-CH-UA-Platform-Version)</Latin>
                </Caption>
                <FieldRow $mt={7}>
                  <Field $w={235}>
                    平臺 <Latin $size={13}>(例如Android)</Latin>
                  </Field>
                  <Field $w={236}>平台版本</Field>
                </FieldRow>
                <Caption $mt={11} $ml={1}>
                  <Latin>Architecture (Sec-CH-UA-Arch)</Latin>
                </Caption>
                <Field $w={481} $mt={11} $pl={7}>
                  架構 <Latin>(例如 x86)</Latin>
                </Field>
                <Caption $mt={9}>
                  裝置型號 <Latin>(Sec-CH-UA-Model)</Latin>
                </Caption>
                <FieldRow $mt={9}>
                  <Field $w={398}>
                    裝置型號 <Latin $size={14}>(Sec-CH-UA-Model)</Latin>
                  </Field>
                  <MobileToggle>C) Mobile</MobileToggle>
                </FieldRow>
                <UpdateButton>更新</UpdateButton>
              </HintsBox>
            </SettingsColumn>
            <Scrollbar>
              <Triangle $up $s={6} $h={8} $c="#8f8f8f" />
              <ScrollThumb />
              <Triangle $s={6} $h={8} $c="#8f8f8f" />
            </Scrollbar>
          </Body>
        </DevTools>
      </Content>
    </Win>
  );
};

export default App;
